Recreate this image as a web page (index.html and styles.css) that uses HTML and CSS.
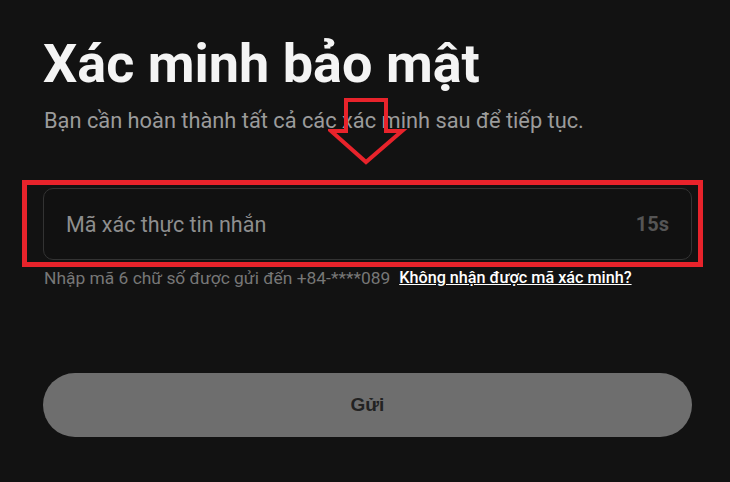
FILE: index.html
```html
<!DOCTYPE html>
<html lang="vi">
<head>
    <meta charset="UTF-8">
    <meta name="viewport" content="width=device-width, initial-scale=1.0">
    <title>Xác minh bảo mật</title>
    <link rel="stylesheet" href="styles.css">
</head>
<body>

    <div class="verify">
        <h1 class="verify-title">Xác minh bảo mật</h1>
        <p class="verify-sub">Bạn cần hoàn thành tất cả các xác minh sau để tiếp tục.</p>

        <div class="code-wrap">
            <div class="code-field">
                <input class="code-input" type="text" placeholder="Mã xác thực tin nhắn">
                <span class="code-timer">15s</span>
            </div>
            <div class="mark-box"></div>
            <svg class="mark-arrow" width="80" height="70" viewBox="0 0 80 70">
                <path d="M18 2 H58 V33 H74 L38 64 L3 33 H18 Z" fill="none" stroke="#e8232b" stroke-width="4" stroke-linejoin="miter"/>
            </svg>
        </div>

        <div class="code-help">
            <span>Nhập mã 6 chữ số được gửi đến +84-****089</span>
            <a href="#" class="code-resend">Không nhận được mã xác minh?</a>
        </div>

        <button class="send-btn" disabled>Gửi</button>
    </div>

</body>
</html>
```

FILE: styles.css
```css
body {
    margin: 0;
    background: #121212;
    font-family: 'Roboto', 'Liberation Sans', sans-serif;
    color: #f2f2f2;
    overflow: hidden;
}

.verify {
    width: 649px;
    padding: 34px 0 0 43px;
}

.verify-title {
    margin: 0;
    font-size: 54px;
    font-weight: 700;
    line-height: 60px;
    color: #f4f4f4;
}

.verify-sub {
    margin: 13px 0 0 1px;
    font-size: 21.8px;
    line-height: 28px;
    color: #9b9b9b;
}

.code-wrap {
    position: relative;
    margin-top: 53px;
}

.code-field {
    display: flex;
    align-items: center;
    height: 72px;
    box-sizing: border-box;
    padding: 0 22px;
    border: 1px solid #333;
    border-radius: 10px;
    background: #111;
}

.code-input {
    flex: 1;
    background: none;
    border: none;
    outline: none;
    font-family: inherit;
    font-size: 21.5px;
    color: #eee;
    padding: 0;
}

.code-input::placeholder {
    color: #8e8e8e;
}

.code-timer {
    font-size: 20px;
    font-weight: 700;
    color: #555;
}

.mark-box {
    position: absolute;
    left: -21px;
    top: -8px;
    width: 671px;
    height: 77px;
    border: 5px solid #e8232b;
    pointer-events: none;
}

.mark-arrow {
    position: absolute;
    left: 285px;
    top: -90px;
}

.code-help {
    display: flex;
    gap: 9px;
    margin: 7px 0 0 1px;
    font-size: 17.4px;
    line-height: 22px;
    color: #777;
}

.code-resend {
    color: #fff;
    font-size: 16.2px;
    font-weight: 500;
    text-decoration: underline;
}

.send-btn {
    display: block;
    width: 100%;
    height: 64px;
    margin-top: 84px;
    border: none;
    border-radius: 32px;
    background: #6e6e6e;
    font-family: 'Liberation Sans', sans-serif;
    font-size: 19px;
    font-weight: 700;
    color: #222;
}
```
